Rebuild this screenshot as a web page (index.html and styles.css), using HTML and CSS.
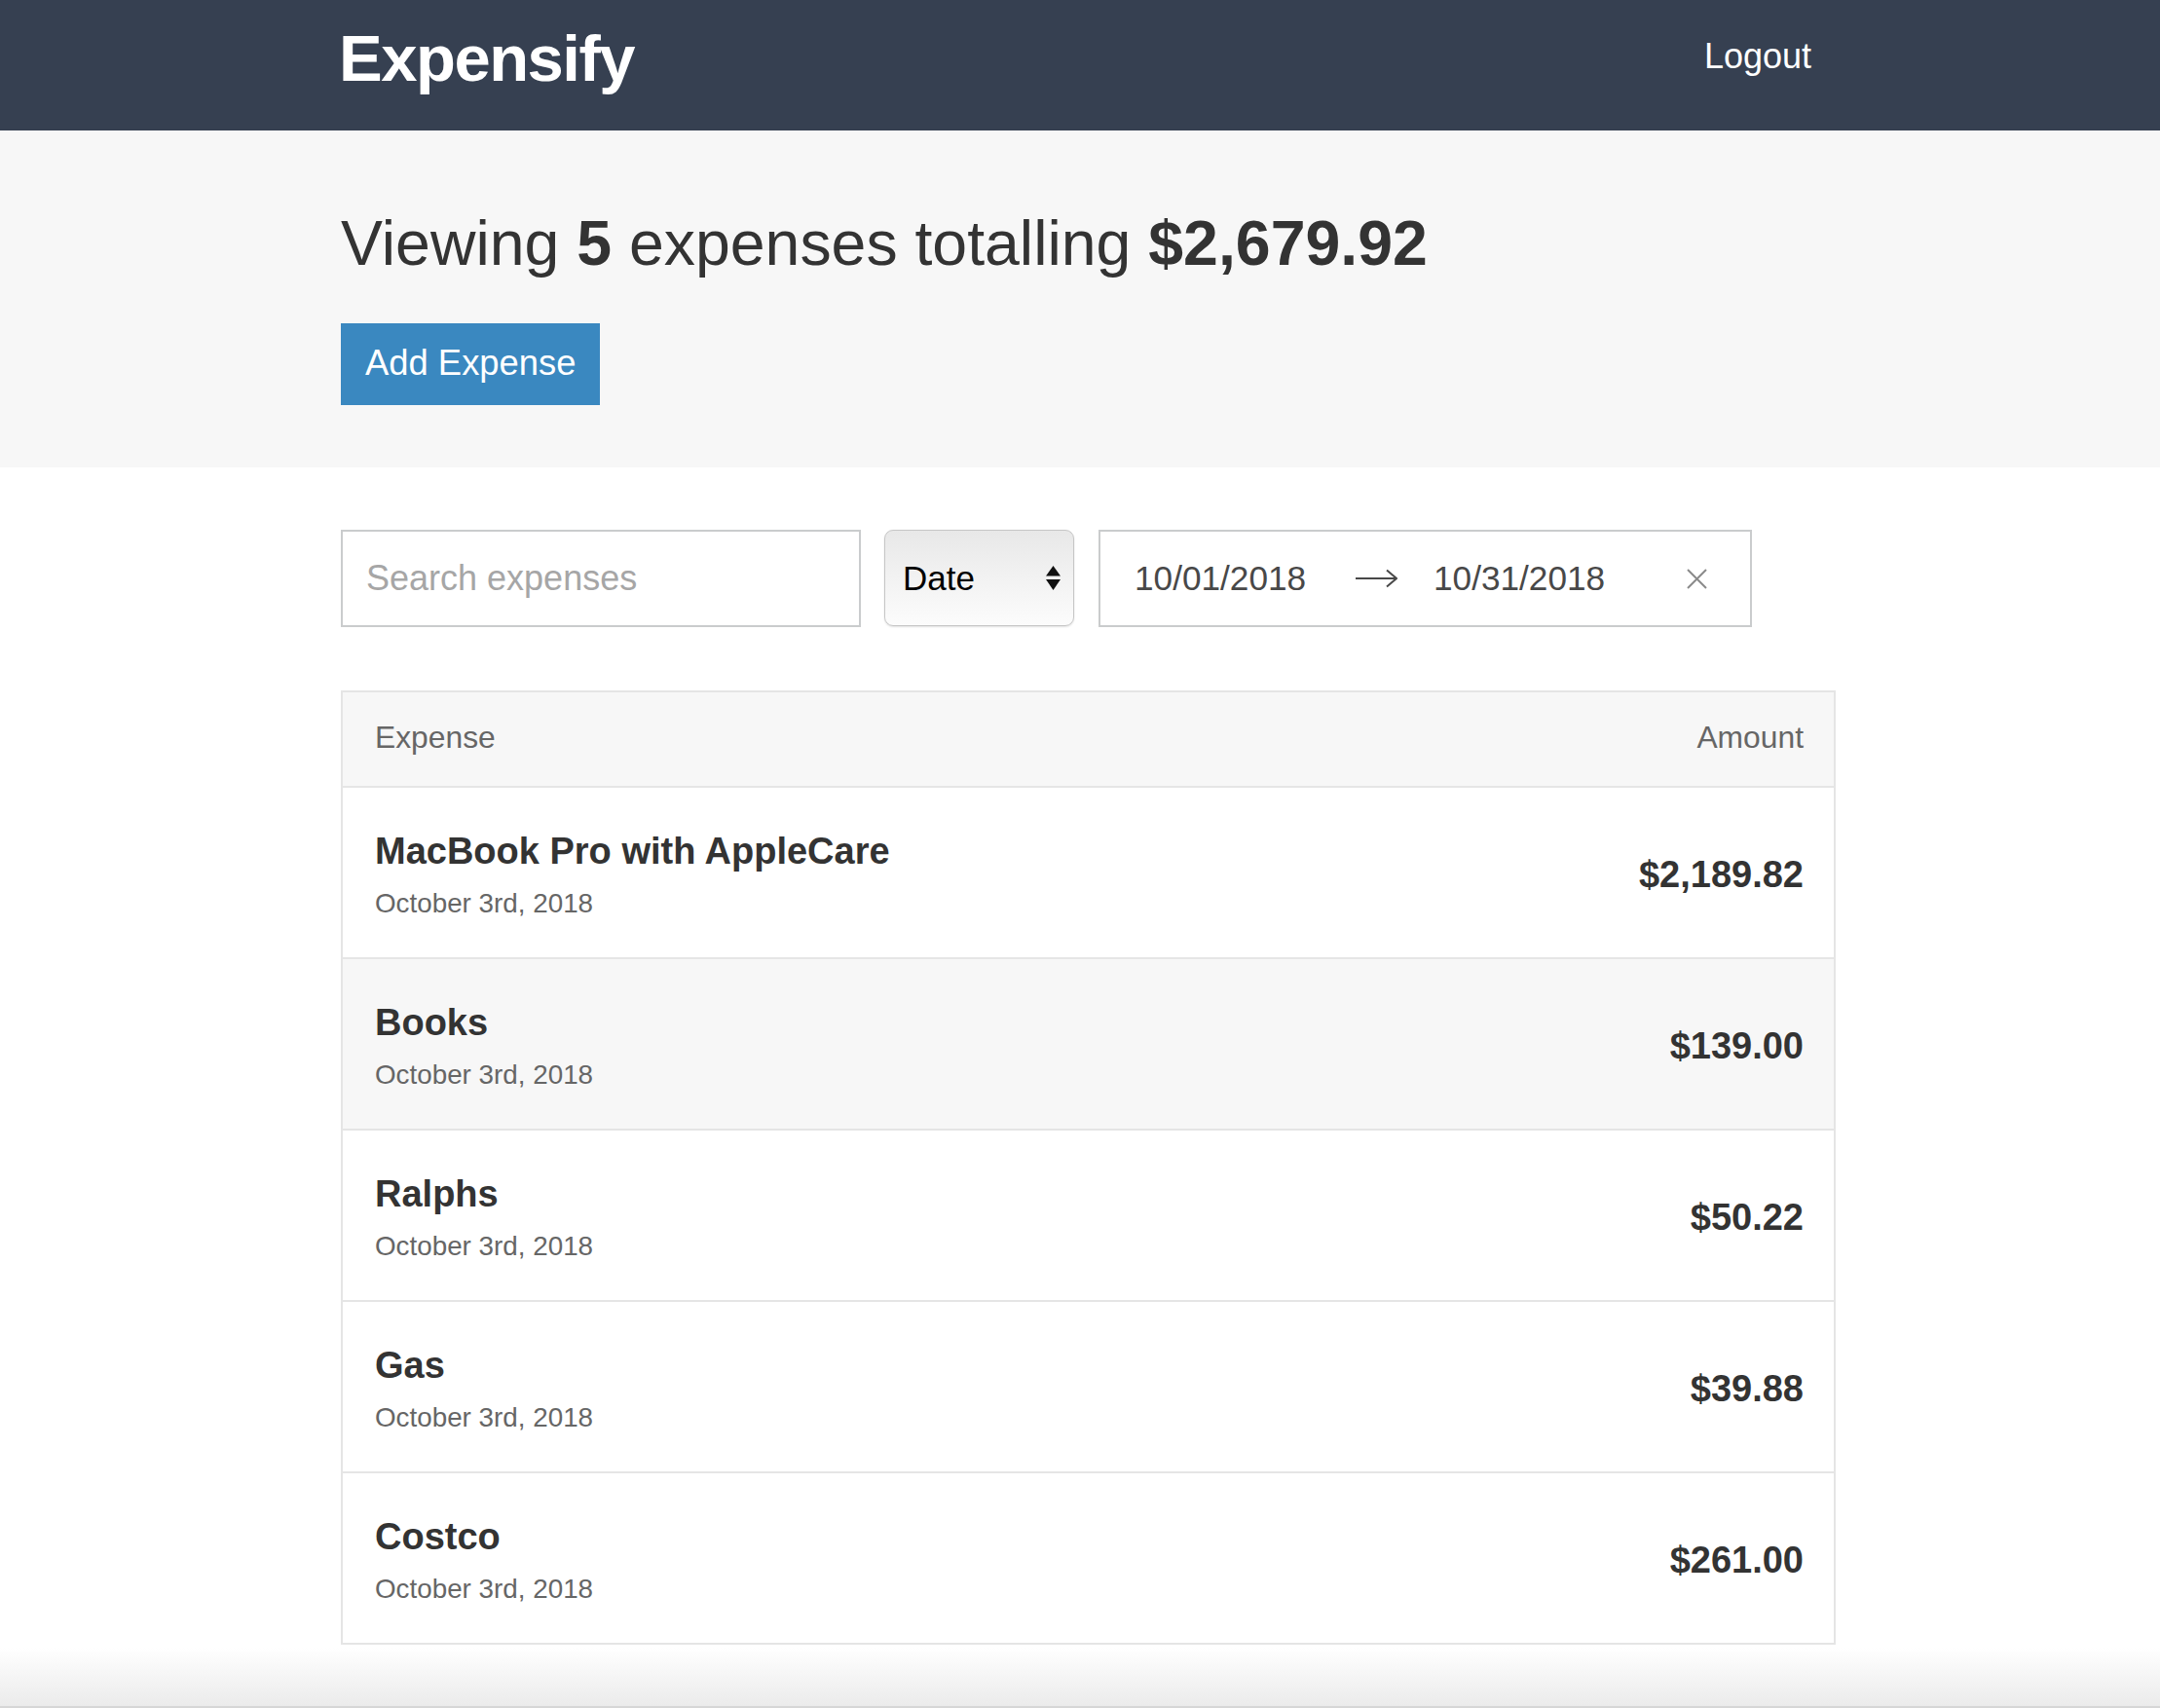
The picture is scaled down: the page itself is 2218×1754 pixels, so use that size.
FILE: index.html
```html
<!DOCTYPE html>
<html lang="en">
<head>
<meta charset="utf-8">
<title>Expensify</title>
<link rel="stylesheet" href="styles.css">
</head>
<body>
<header class="header">
  <div class="container header__content">
    <h1 class="header__title">Expensify</h1>
    <button class="header__logout">Logout</button>
  </div>
</header>

<section class="page-header">
  <div class="container page-header__content">
    <h1 class="page-header__title">Viewing <span class="bold">5</span> expenses totalling <span class="bold">$2,679.92</span></h1>
    <a class="button">Add Expense</a>
  </div>
</section>

<main class="container">
  <div class="filters">
    <input class="search" type="text" placeholder="Search expenses">
    <div class="select">
      <span>Date</span>
      <svg class="select__arrows" width="15" height="25" viewBox="0 0 15 25"><polygon points="0,10.5 7.5,0 15,10.5" fill="#111"/><polygon points="0,14 15,14 7.5,25" fill="#111"/></svg>
    </div>
    <div class="date-range">
      <span class="date-range__date">10/01/2018</span>
      <svg class="date-range__arrow" width="43" height="20" viewBox="0 0 43 20"><path d="M0 10 H42 M32 1.5 L42 10 L32 18.5" fill="none" stroke="#484848" stroke-width="2"/></svg>
      <span class="date-range__date">10/31/2018</span>
      <svg class="date-range__clear" width="23" height="23" viewBox="0 0 23 23"><path d="M2 2 L21 21 M21 2 L2 21" fill="none" stroke="#8a8a8a" stroke-width="2"/></svg>
    </div>
  </div>

  <div class="list">
    <div class="list-header">
      <span>Expense</span>
      <span>Amount</span>
    </div>
    <div class="list-item">
      <div>
        <h3 class="list-item__title">MacBook Pro with AppleCare</h3>
        <span class="list-item__sub">October 3rd, 2018</span>
      </div>
      <h3 class="list-item__amount">$2,189.82</h3>
    </div>
    <div class="list-item list-item--hover">
      <div>
        <h3 class="list-item__title">Books</h3>
        <span class="list-item__sub">October 3rd, 2018</span>
      </div>
      <h3 class="list-item__amount">$139.00</h3>
    </div>
    <div class="list-item">
      <div>
        <h3 class="list-item__title">Ralphs</h3>
        <span class="list-item__sub">October 3rd, 2018</span>
      </div>
      <h3 class="list-item__amount">$50.22</h3>
    </div>
    <div class="list-item">
      <div>
        <h3 class="list-item__title">Gas</h3>
        <span class="list-item__sub">October 3rd, 2018</span>
      </div>
      <h3 class="list-item__amount">$39.88</h3>
    </div>
    <div class="list-item">
      <div>
        <h3 class="list-item__title">Costco</h3>
        <span class="list-item__sub">October 3rd, 2018</span>
      </div>
      <h3 class="list-item__amount">$261.00</h3>
    </div>
  </div>
</main>
<div class="fade"></div>
</body>
</html>
```

FILE: styles.css
```css
* { box-sizing: border-box; }

html, body {
  margin: 0;
  padding: 0;
}

body {
  font-family: "Liberation Sans", Arial, Helvetica, sans-serif;
  color: #333;
  background: #fff;
  overflow: hidden;
}

.container {
  width: 1535px;
  margin-left: 350px;
}

/* Header */
.header {
  background: #364051;
  height: 134px;
}

.header__content {
  display: flex;
  justify-content: space-between;
  align-items: flex-start;
  height: 134px;
}

.header__title {
  margin: 26px 0 0 -2px;
  font-size: 67px;
  line-height: 67px;
  font-weight: 700;
  letter-spacing: -1.5px;
  color: #fff;
}

.header__logout {
  margin: 40px 25px 0 0;
  padding: 0;
  border: 0;
  background: none;
  color: #fff;
  font-family: "Liberation Sans", Arial, sans-serif;
  font-size: 36px;
  line-height: 36px;
}

/* Page header */
.page-header {
  background: #f7f7f7;
  padding: 84px 0 64px;
  height: 346px;
}

.page-header__content {
  display: flex;
  flex-direction: column;
  align-items: flex-start;
}

.page-header__title {
  margin: 0 0 50px;
  font-size: 64.4px;
  line-height: 64px;
  font-weight: 400;
  color: #333;
}

.bold { font-weight: 700; }

.button {
  display: block;
  background: #3a88c0;
  color: #fff;
  font-size: 36.4px;
  line-height: 36px;
  padding: 23px 25px 25px;
}

/* Filters */
.filters {
  display: flex;
  align-items: stretch;
  margin-top: 64px;
  height: 100px;
}

.search {
  width: 534px;
  height: 100px;
  margin: 0 24px 0 0;
  border: 2px solid #cacccd;
  padding: 0 24px;
  font-family: "Liberation Sans", Arial, sans-serif;
  font-size: 36px;
  color: #333;
  outline: none;
}

.search::placeholder { color: #a6a6a6; }

.select {
  width: 195px;
  height: 99px;
  margin-right: 25px;
  border: 1px solid #c6c6c6;
  border-radius: 9px;
  background: linear-gradient(#e8e8e8, #fcfcfc);
  box-shadow: 0 1px 2px rgba(0, 0, 0, 0.12);
  display: flex;
  align-items: center;
  justify-content: space-between;
  padding: 0 13px 0 18px;
  font-size: 35px;
  color: #000;
}

.date-range {
  width: 671px;
  height: 100px;
  border: 2px solid #cacccd;
  display: flex;
  align-items: center;
  padding-left: 35px;
  color: #484848;
  font-size: 35.2px;
}

.date-range__date { width: 175px; }

.date-range__arrow { margin: 0 37px 0 52px; }

.date-range__clear { margin-left: 84px; }

/* List */
.list {
  margin-top: 65px;
  border: 2px solid #e5e5e5;
  border-bottom: 0;
}

.list-header {
  display: flex;
  justify-content: space-between;
  height: 98px;
  background: #f7f7f7;
  padding: 31px 31px 0 33px;
  font-size: 31.8px;
  line-height: 31px;
  color: #666;
  border-bottom: 2px solid #e5e5e5;
}

.list-item {
  display: flex;
  justify-content: space-between;
  align-items: center;
  height: 176px;
  padding: 4px 31px 0 33px;
  border-bottom: 2px solid #e5e5e5;
  background: #fff;
}

.list-item--hover { background: #f7f7f7; }

.list-item__title {
  margin: 0 0 21px;
  font-size: 38px;
  line-height: 37px;
  font-weight: 700;
  color: #333;
}

.list-item__sub {
  display: block;
  font-size: 27.8px;
  line-height: 27px;
  color: #666;
}

.list-item__amount {
  margin: 0;
  font-size: 38px;
  line-height: 38px;
  font-weight: 700;
  color: #333;
}

.fade {
  height: 65px;
  background: linear-gradient(#ffffff 5%, #ebebeb);
  border-bottom: 2px solid #d6d6d6;
}
```
